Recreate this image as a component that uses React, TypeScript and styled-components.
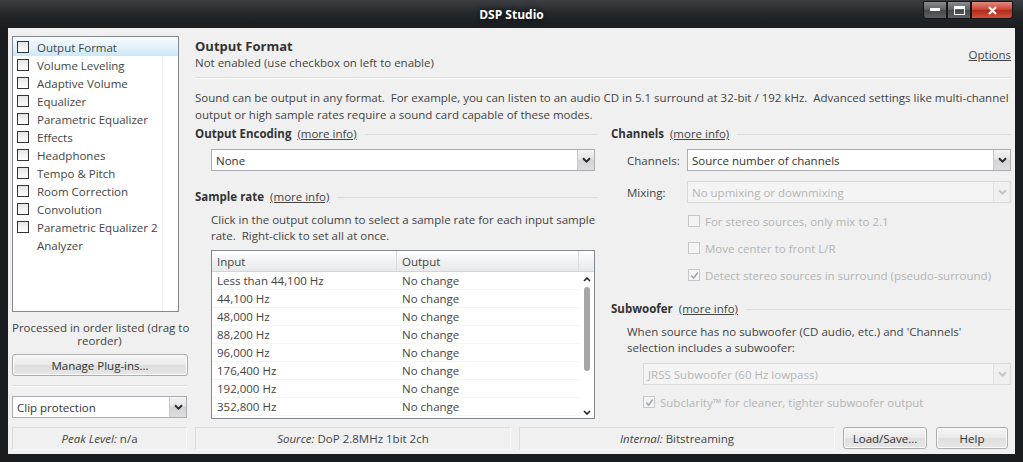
import styled, { createGlobalStyle } from "styled-components";

const GlobalStyle = createGlobalStyle`
  html, body {
    margin: 0;
    padding: 0;
    background: #1c1f22;
  }
  body {
    font-family: "Open Sans", "Noto Sans", sans-serif;
    font-size: 11.5px;
    color: #3a3a3a;
  }
`;

const Window = styled.div`
  width: 1023px;
  height: 462px;
  display: flex;
  flex-direction: column;
  background: linear-gradient(#3b3f43 0px, #24272a 14px, #1a1d20 28px, #1a1d20 100%);
  box-sizing: border-box;
  overflow: hidden;
`;

const TitleBar = styled.div`
  height: 28px;
  flex: none;
  display: flex;
  align-items: center;
  justify-content: center;
  position: relative;
  color: #ffffff;
  font-weight: 700;
  font-size: 12px;
  text-shadow: 0 0 6px #000;
`;

const Caption = styled.div`
  position: absolute;
  right: 10px;
  top: 1px;
  display: flex;
`;

const CapButton = styled.div<{ $close?: boolean; $w: number }>`
  width: ${(p) => p.$w}px;
  height: 18px;
  box-sizing: border-box;
  display: flex;
  align-items: center;
  justify-content: center;
  border: 1px solid #141618;
  border-radius: ${(p) => (p.$close ? "0 0 4px 0" : "0")};
  background: ${(p) =>
    p.$close
      ? "linear-gradient(#e28a7f, #c8402f 50%, #b12a1b 51%, #d0523c)"
      : "linear-gradient(#8a8e92, #5b5f63 50%, #44484c 51%, #5e6266)"};
  &:first-child {
    border-radius: 0 0 0 4px;
  }
`;

const Body = styled.div`
  flex: 1;
  margin: 0 8px 8px 8px;
  background: #f0f0f0;
  padding: 8px 4px 4px 4px;
  display: flex;
  flex-direction: column;
  min-height: 0;
`;

const Main = styled.div`
  height: 384px;
  flex: none;
  display: grid;
  grid-template-columns: 175px 1fr;
  column-gap: 8px;
  overflow: hidden;
`;

const Sidebar = styled.div`
  display: flex;
  flex-direction: column;
`;

const ListBox = styled.div`
  height: 276px;
  box-sizing: border-box;
  border: 1px solid #828790;
  background: #ffffff;
  margin-right: 8px;
  padding-top: 1px;
  position: relative;
`;

const ListDivider = styled.div`
  position: absolute;
  left: 149px;
  top: 0;
  bottom: 0;
  width: 1px;
  background: #f3f3f3;
`;

const ListItem = styled.div<{ $selected?: boolean }>`
  height: 18px;
  display: flex;
  align-items: center;
  padding-left: 4px;
  color: #444;
  position: relative;
  white-space: nowrap;
  background: ${(p) =>
    p.$selected ? "linear-gradient(#f6fbfe, #dff0fb 60%, #cbe7f8)" : "transparent"};
`;

const Box = styled.span<{ $disabled?: boolean }>`
  width: 12px;
  height: 12px;
  box-sizing: border-box;
  border: 1px solid ${(p) => (p.$disabled ? "#c6c6c6" : "#333")};
  background: ${(p) => (p.$disabled ? "#f4f4f4" : "linear-gradient(#e4e4e4, #ffffff)")};
  display: inline-flex;
  align-items: center;
  justify-content: center;
  flex: none;
`;

const ItemLabel = styled.span<{ $indent?: boolean }>`
  margin-left: ${(p) => (p.$indent ? "20px" : "8px")};
`;

const Note = styled.div`
  margin-top: 9px;
  text-align: center;
  line-height: 13px;
  color: #444;
  white-space: nowrap;
`;

const Button = styled.div`
  height: 22px;
  box-sizing: border-box;
  border: 1px solid #acacac;
  border-radius: 3px;
  background: linear-gradient(#f6f6f6, #e9e9e9 50%, #dedede 51%, #e6e6e6);
  display: flex;
  align-items: center;
  justify-content: center;
  color: #333;
  box-shadow: inset 0 0 0 1px #fbfbfb;
`;

const SideButton = styled(Button)`
  margin-top: 7px;
  margin-right: -1px;
`;

const Separator = styled.div`
  height: 1px;
  background: #dcdcdc;
  box-shadow: 0 1px 0 #fff;
`;

const SideSep = styled(Separator)`
  margin-top: 9px;
`;

const Combo = styled.div<{ $disabled?: boolean }>`
  height: 22px;
  box-sizing: border-box;
  border: 1px solid ${(p) => (p.$disabled ? "#d9d9d9" : "#abadb3")};
  background: ${(p) => (p.$disabled ? "#f4f4f4" : "#ffffff")};
  color: ${(p) => (p.$disabled ? "#b4b4b4" : "#333")};
  display: flex;
  align-items: center;
`;

const ComboText = styled.span`
  flex: 1;
  padding-left: 4px;
  white-space: nowrap;
  overflow: hidden;
`;

const ComboButton = styled.div<{ $disabled?: boolean }>`
  width: 16px;
  align-self: stretch;
  border-left: 1px solid ${(p) => (p.$disabled ? "#e0e0e0" : "#c8c8c8")};
  background: ${(p) =>
    p.$disabled ? "#f0f0f0" : "linear-gradient(#f4f4f4, #e2e2e2 50%, #d4d4d4 51%, #dddddd)"};
  display: flex;
  align-items: center;
  justify-content: center;
`;

const SideCombo = styled(Combo)`
  margin-top: 10px;
`;

const Content = styled.div`
  display: flex;
  flex-direction: column;
  min-width: 0;
`;

const HeadRow = styled.div`
  display: flex;
  justify-content: space-between;
  align-items: center;
  padding-top: 1px;
`;

const Title = styled.div`
  font-size: 13px;
  font-weight: 700;
  line-height: 18px;
  color: #333;
`;

const Sub = styled.div`
  line-height: 16px;
  color: #444;
`;

const Link = styled.span`
  text-decoration: underline;
  color: #444;
  font-weight: 400;
`;

const HeadSep = styled(Separator)`
  margin-top: 6px;
`;

const Description = styled.div`
  margin-top: 11px;
  line-height: 17px;
  color: #444;
  white-space: nowrap;
`;

const Columns = styled.div`
  display: grid;
  grid-template-columns: 402px 400px;
  column-gap: 14px;
`;

const Column = styled.div`
  display: flex;
  flex-direction: column;
`;

const Section = styled.div<{ $mt?: number }>`
  margin-top: ${(p) => p.$mt ?? 0}px;
  display: flex;
  align-items: center;
  line-height: 18px;
  font-weight: 700;
  color: #333;
  white-space: nowrap;
  &::after {
    content: "";
    flex: 1;
    height: 1px;
    background: #dcdcdc;
    margin-left: 8px;
  }
`;

const SectionLink = styled(Link)`
  margin-left: 6px;
`;

const Indented = styled.div<{ $mt?: number; $left?: number; $right?: number }>`
  margin-top: ${(p) => p.$mt ?? 0}px;
  margin-left: ${(p) => p.$left ?? 16}px;
  margin-right: ${(p) => p.$right ?? 0}px;
`;

const Para = styled.div`
  line-height: 16px;
  color: #444;
  white-space: nowrap;
`;

const Table = styled.div`
  height: 169px;
  box-sizing: border-box;
  border: 1px solid #828790;
  background: #fff;
  display: grid;
  grid-template-columns: 1fr 15px;
  grid-template-rows: 21px 146px;
  overflow: hidden;
`;

const HeaderCells = styled.div`
  display: grid;
  grid-template-columns: 185px 1fr;
  background: linear-gradient(#ffffff, #f1f2f4 50%, #e8e9eb);
  border-bottom: 1px solid #d5d5d5;
`;

const HeaderCell = styled.div`
  display: flex;
  align-items: center;
  padding-left: 5px;
  color: #444;
  border-right: 1px solid #dadada;
`;

const HeaderCorner = styled.div`
  background: linear-gradient(#ffffff, #f1f2f4 50%, #e8e9eb);
  border-bottom: 1px solid #d5d5d5;
`;

const Rows = styled.div`
  display: flex;
  flex-direction: column;
`;

const Row = styled.div`
  height: 18px;
  flex: none;
  display: grid;
  grid-template-columns: 185px 1fr;
  align-items: center;
  color: #444;
  border-bottom: 1px solid #f5f5f5;
  box-sizing: border-box;
`;

const Cell = styled.div`
  padding-left: 5px;
  white-space: nowrap;
`;

const ScrollBar = styled.div`
  display: flex;
  flex-direction: column;
  align-items: center;
  padding: 5px 0 3px;
`;

const Thumb = styled.div`
  width: 6px;
  height: 84px;
  border-radius: 3px;
  background: #a6a6a6;
  margin-top: 5px;
  margin-bottom: auto;
`;

const FieldRow = styled.div<{ $mt?: number }>`
  margin-top: ${(p) => p.$mt ?? 0}px;
  margin-left: 16px;
  display: grid;
  grid-template-columns: 60px 1fr;
  align-items: center;
`;

const FieldLabel = styled.span`
  color: #444;
`;

const CheckRow = styled.div<{ $mt?: number; $left: number }>`
  margin-top: ${(p) => p.$mt ?? 0}px;
  margin-left: ${(p) => p.$left}px;
  height: 18px;
  display: flex;
  align-items: center;
  color: #b4b4b4;
  white-space: nowrap;
`;

const CheckText = styled.span`
  margin-left: 5px;
`;

const StatusBar = styled.div`
  margin-top: 7px;
  height: 23px;
  flex: none;
  display: grid;
  grid-template-columns: 175px 316px 316px 84px 73px;
  column-gap: 8px;
  & > :nth-child(5) {
    margin-left: 1px;
  }
`;

const Panel = styled.div`
  box-sizing: border-box;
  border: 1px solid #dcdcdc;
  border-right-color: #fafafa;
  border-bottom-color: #fafafa;
  display: flex;
  align-items: center;
  justify-content: center;
  color: #444;
  white-space: nowrap;
`;

const Em = styled.i`
  margin-right: 3px;
`;

const Chevron = ({ disabled }: { disabled?: boolean }) => (
  <svg width="9" height="6" viewBox="0 0 9 6">
    <path
      d="M1 1.2 L4.5 4.6 L8 1.2"
      fill="none"
      stroke={disabled ? "#c4c4c4" : "#2b2b2b"}
      strokeWidth="2"
    />
  </svg>
);

const Tick = () => (
  <svg width="9" height="9" viewBox="0 0 9 9">
    <path d="M1.3 4.6 L3.6 7 L7.8 1.5" fill="none" stroke="#9aa6b2" strokeWidth="1.5" />
  </svg>
);

const ComboBox = ({ text, disabled }: { text: string; disabled?: boolean }) => (
  <Combo $disabled={disabled}>
    <ComboText>{text}</ComboText>
    <ComboButton $disabled={disabled}>
      <Chevron disabled={disabled} />
    </ComboButton>
  </Combo>
);

const plugins = [
  "Output Format",
  "Volume Leveling",
  "Adaptive Volume",
  "Equalizer",
  "Parametric Equalizer",
  "Effects",
  "Headphones",
  "Tempo & Pitch",
  "Room Correction",
  "Convolution",
  "Parametric Equalizer 2",
];

const rates = [
  "Less than 44,100 Hz",
  "44,100 Hz",
  "48,000 Hz",
  "88,200 Hz",
  "96,000 Hz",
  "176,400 Hz",
  "192,000 Hz",
  "352,800 Hz",
];

function App() {
  return (
    <>
      <GlobalStyle />
      <Window>
        <TitleBar>
          DSP Studio
          <Caption>
            <CapButton $w={24}>
              <svg width="10" height="4">
                <rect x="0" y="0" width="10" height="3" fill="#fff" />
              </svg>
            </CapButton>
            <CapButton $w={24}>
              <svg width="11" height="9">
                <rect x="0.5" y="0.5" width="10" height="8" fill="none" stroke="#fff" />
                <rect x="0" y="0" width="11" height="3" fill="#fff" />
              </svg>
            </CapButton>
            <CapButton $w={42} $close>
              <svg width="11" height="9" viewBox="0 0 11 9">
                <path d="M2 1 L9 8 M9 1 L2 8" stroke="#fff" strokeWidth="2.2" />
              </svg>
            </CapButton>
          </Caption>
        </TitleBar>
        <Body>
          <Main>
            <Sidebar>
              <ListBox>
                <ListDivider />
                {plugins.map((p, i) => (
                  <ListItem key={p} $selected={i === 0}>
                    <Box />
                    <ItemLabel>{p}</ItemLabel>
                  </ListItem>
                ))}
                <ListItem>
                  <ItemLabel $indent>Analyzer</ItemLabel>
                </ListItem>
              </ListBox>
              <Note>
                Processed in order listed (drag to
                <br />
                reorder)
              </Note>
              <SideButton>Manage Plug-ins...</SideButton>
              <SideSep />
              <SideCombo>
                <ComboText>Clip protection</ComboText>
                <ComboButton>
                  <Chevron />
                </ComboButton>
              </SideCombo>
            </Sidebar>
            <Content>
              <HeadRow>
                <div>
                  <Title>Output Format</Title>
                  <Sub>Not enabled (use checkbox on left to enable)</Sub>
                </div>
                <Link>Options</Link>
              </HeadRow>
              <HeadSep />
              <Description>
                Sound can be output in any format.&nbsp; For example, you can listen to an audio CD
                in 5.1 surround at 32-bit / 192 kHz.&nbsp; Advanced settings like multi-channel
                <br />
                output or high sample rates require a sound card capable of these modes.
              </Description>
              <Columns>
                <Column>
                  <Section $mt={2}>
                    Output Encoding <SectionLink>(more info)</SectionLink>
                  </Section>
                  <Indented $mt={6} $right={2}>
                    <ComboBox text="None" />
                  </Indented>
                  <Section $mt={17}>
                    Sample rate <SectionLink>(more info)</SectionLink>
                  </Section>
                  <Indented $mt={6}>
                    <Para>
                      Click in the output column to select a sample rate for each input sample
                      <br />
                      rate.&nbsp; Right-click to set all at once.
                    </Para>
                  </Indented>
                  <Indented $mt={6} $right={2}>
                    <Table>
                      <HeaderCells>
                        <HeaderCell>Input</HeaderCell>
                        <HeaderCell>Output</HeaderCell>
                      </HeaderCells>
                      <HeaderCorner />
                      <Rows>
                        {rates.map((r) => (
                          <Row key={r}>
                            <Cell>{r}</Cell>
                            <Cell>No change</Cell>
                          </Row>
                        ))}
                      </Rows>
                      <ScrollBar>
                        <svg width="8" height="5" viewBox="0 0 8 5">
                          <path d="M1 4 L4 1 L7 4" fill="none" stroke="#222" strokeWidth="1.6" />
                        </svg>
                        <Thumb />
                        <svg width="8" height="5" viewBox="0 0 8 5">
                          <path d="M1 1 L4 4 L7 1" fill="none" stroke="#222" strokeWidth="1.6" />
                        </svg>
                      </ScrollBar>
                    </Table>
                  </Indented>
                </Column>
                <Column>
                  <Section $mt={2}>
                    Channels <SectionLink>(more info)</SectionLink>
                  </Section>
                  <FieldRow $mt={6}>
                    <FieldLabel>Channels:</FieldLabel>
                    <ComboBox text="Source number of channels" />
                  </FieldRow>
                  <FieldRow $mt={10}>
                    <FieldLabel>Mixing:</FieldLabel>
                    <ComboBox text="No upmixing or downmixing" disabled />
                  </FieldRow>
                  <CheckRow $mt={9} $left={77}>
                    <Box $disabled />
                    <CheckText>For stereo sources, only mix to 2.1</CheckText>
                  </CheckRow>
                  <CheckRow $mt={9} $left={77}>
                    <Box $disabled />
                    <CheckText>Move center to front L/R</CheckText>
                  </CheckRow>
                  <CheckRow $mt={9} $left={77}>
                    <Box $disabled>
                      <Tick />
                    </Box>
                    <CheckText>Detect stereo sources in surround (pseudo-surround)</CheckText>
                  </CheckRow>
                  <Section $mt={16}>
                    Subwoofer <SectionLink>(more info)</SectionLink>
                  </Section>
                  <Indented $mt={6}>
                    <Para>
                      When source has no subwoofer (CD audio, etc.) and 'Channels'
                      <br />
                      selection includes a subwoofer:
                    </Para>
                  </Indented>
                  <Indented $mt={7} $left={32}>
                    <ComboBox text="JRSS Subwoofer (60 Hz lowpass)" disabled />
                  </Indented>
                  <CheckRow $mt={8} $left={32}>
                    <Box $disabled>
                      <Tick />
                    </Box>
                    <CheckText>Subclarity™ for cleaner, tighter subwoofer output</CheckText>
                  </CheckRow>
                </Column>
              </Columns>
            </Content>
          </Main>
          <StatusBar>
            <Panel>
              <Em>Peak Level:</Em> n/a
            </Panel>
            <Panel>
              <Em>Source:</Em> DoP 2.8MHz 1bit 2ch
            </Panel>
            <Panel>
              <Em>Internal:</Em> Bitstreaming
            </Panel>
            <Button>Load/Save...</Button>
            <Button>Help</Button>
          </StatusBar>
        </Body>
      </Window>
    </>
  );
}

export default App;
